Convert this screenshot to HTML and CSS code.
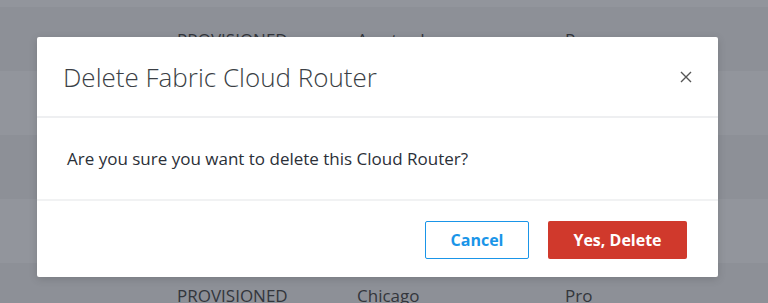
FILE: index.html
```html
<!DOCTYPE html>
<html lang="en">
<head>
    <meta charset="UTF-8">
    <meta name="viewport" content="width=device-width, initial-scale=1.0">
    <title>Delete Fabric Cloud Router</title>
    <link rel="stylesheet" href="styles.css">
</head>
<body>
    <div class="table">
        <div class="row"></div>
        <div class="row"><span>PROVISIONED</span><span>Amsterdam</span><span>Pro</span></div>
        <div class="row"></div>
        <div class="row"></div>
        <div class="row"></div>
        <div class="row"><span>PROVISIONED</span><span>Chicago</span><span>Pro</span></div>
    </div>

    <div class="modal">
        <div class="modal-header">
            <h2>Delete Fabric Cloud Router</h2>
            <button class="close" aria-label="Close">
                <svg width="12" height="12" viewBox="0 0 12 12"><path d="M1 1L11 11M11 1L1 11" stroke="#555" stroke-width="1.4" fill="none"/></svg>
            </button>
        </div>
        <div class="modal-body">
            <p>Are you sure you want to delete this Cloud Router?</p>
        </div>
        <div class="modal-footer">
            <button class="btn btn-cancel">Cancel</button>
            <button class="btn btn-delete">Yes, Delete</button>
        </div>
    </div>
</body>
</html>
```

FILE: styles.css
```css
html, body {
    height: 303px;
    overflow: hidden;
}
body {
    margin: 0;
    font-family: "Open Sans", Arial, sans-serif;
    background-color: #8d9097;
}
.table {
    margin-top: -57px;
}
.row {
    display: grid;
    grid-template-columns: 180px 208px 1fr;
    align-items: center;
    height: 64px;
    padding-left: 177px;
    background: #8d9097;
    color: #33363c;
    font-size: 17px;
}
.row:nth-child(odd) {
    background: #92959c;
}
.modal {
    position: absolute;
    left: 37px;
    top: 37px;
    width: 681px;
    background: white;
    border-radius: 2px;
    box-shadow: 0 2px 8px rgba(0,0,0,0.15);
}
.modal-header {
    display: flex;
    align-items: center;
    justify-content: space-between;
    height: 79px;
    padding: 0 26px;
    border-bottom: 2px solid #eeeff1;
}
.modal-header h2 {
    margin: 0;
    font-size: 26px;
    font-weight: 300;
    color: #3b3f45;
}
.close {
    background: none;
    border: none;
    padding: 0;
    cursor: pointer;
    display: flex;
}
.modal-body {
    height: 81px;
    display: flex;
    align-items: center;
    padding: 0 30px;
    border-bottom: 2px solid #f1f2f3;
}
.modal-body p {
    margin: 0;
    font-size: 17px;
    color: #2b3038;
}
.modal-footer {
    display: flex;
    justify-content: flex-end;
    gap: 19px;
    padding: 20px 31px 18px;
}
.btn {
    height: 38px;
    border-radius: 2px;
    font-family: "Open Sans", Arial, sans-serif;
    font-size: 16px;
    font-weight: 700;
    cursor: pointer;
}
.btn-cancel {
    width: 104px;
    background: white;
    border: 1px solid #1a95e8;
    color: #1a95e8;
}
.btn-delete {
    width: 139px;
    background: #d0392c;
    border: none;
    color: white;
}
```
